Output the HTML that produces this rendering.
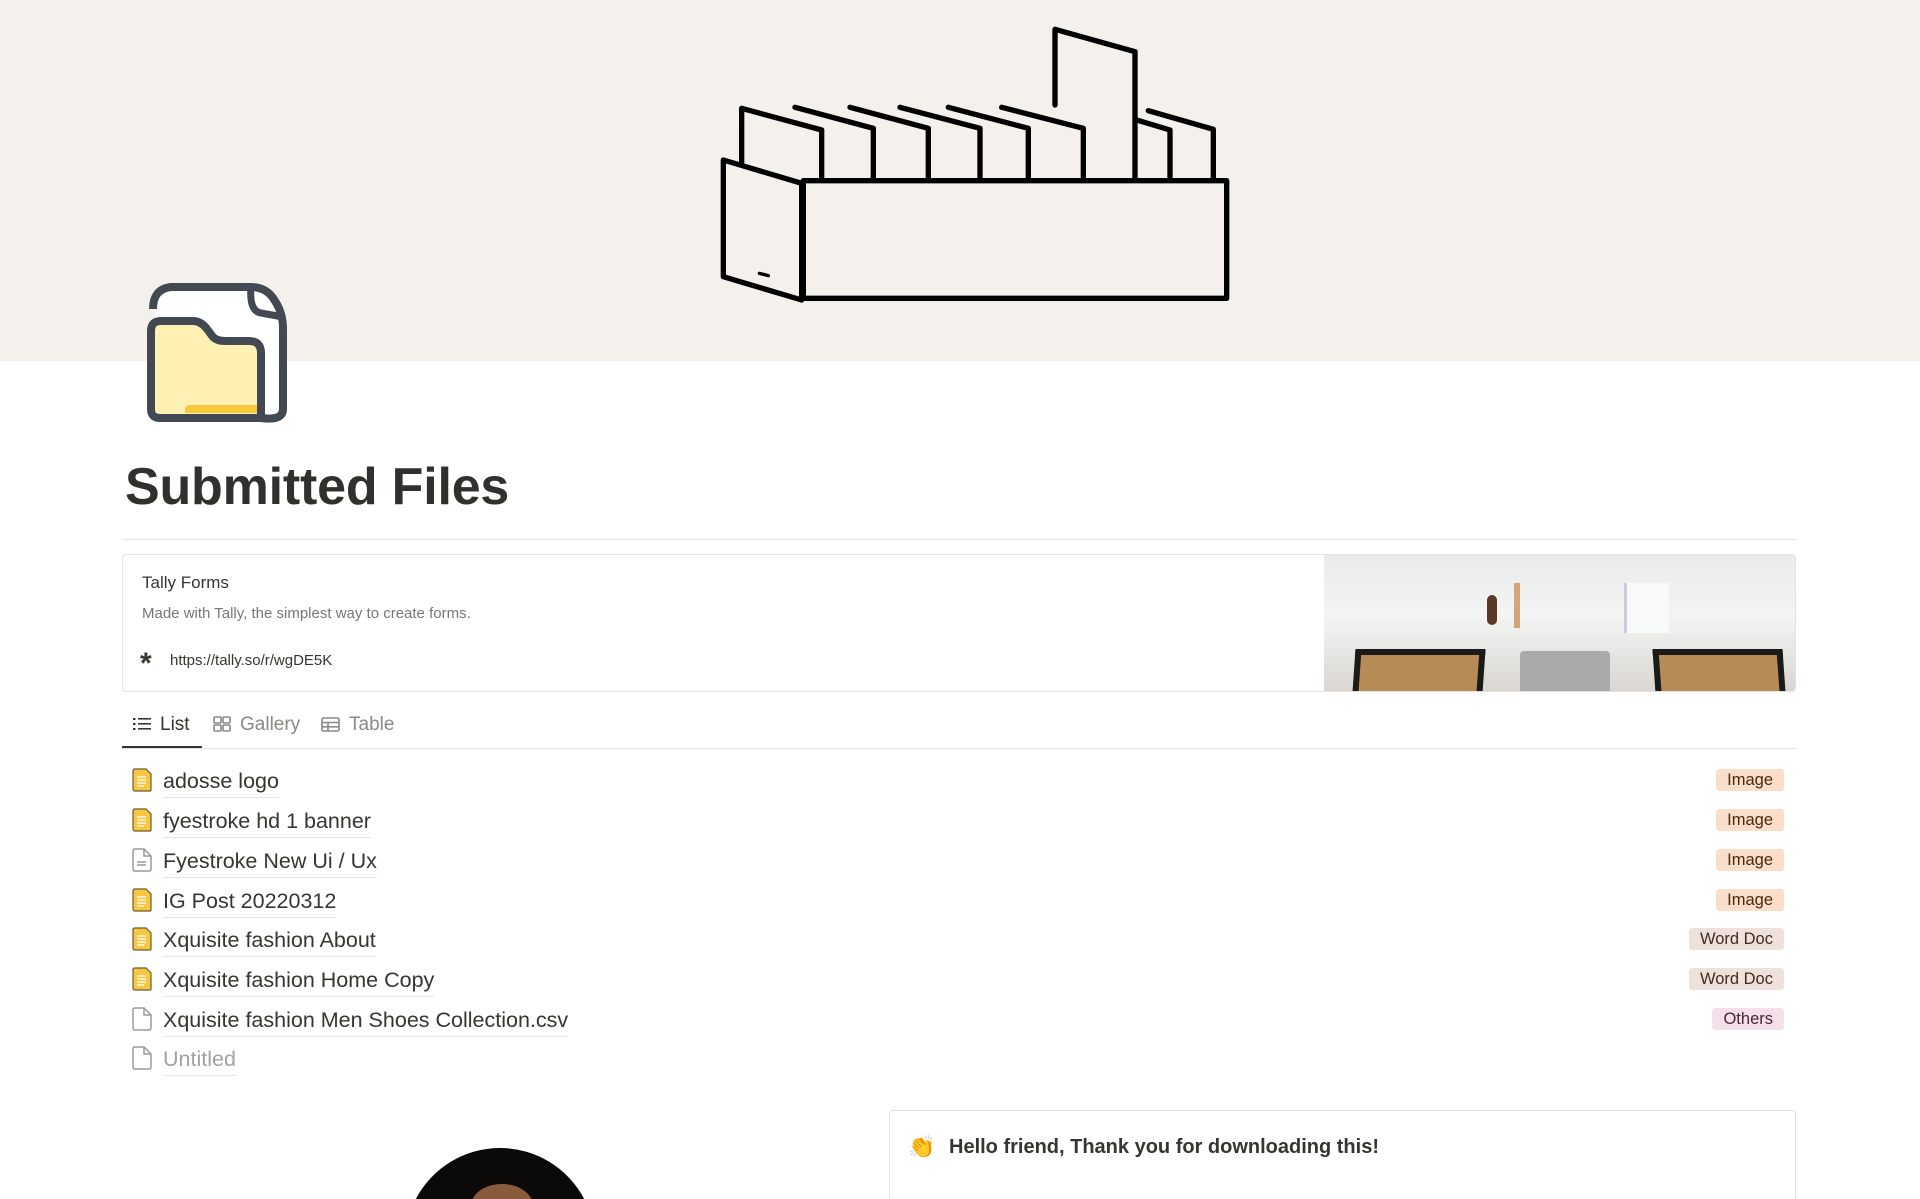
<!DOCTYPE html>
<html><head><meta charset="utf-8"><style>
*{margin:0;padding:0;box-sizing:border-box}
html,body{width:1920px;height:1199px;overflow:hidden}
body{background:#fff;font-family:"Liberation Sans",sans-serif;color:#37352f}
#wrap{position:relative;width:1920px;height:1199px;overflow:hidden}
.banner{position:absolute;left:0;top:0;width:1920px;height:361px;background:#f4f1ec}
.abs{position:absolute}
h1{position:absolute;left:125px;top:457px;font-size:52px;font-weight:bold;color:#32302c;letter-spacing:-0.2px}
.hr{position:absolute;left:122px;width:1674px;height:1px;background:#e3e2e0}
.bm{position:absolute;left:122px;top:554px;width:1674px;height:138px;border:1px solid #e3e2e0;border-radius:4px;overflow:hidden}
.row{position:absolute;left:130px;height:40px;width:1660px}
.row .t{position:absolute;left:33px;top:9px;font-size:21.5px;color:#37352f;border-bottom:1px solid #e6e5e3;padding-bottom:3px;line-height:25px}
.tag{position:absolute;right:6px;top:9px;height:22px;line-height:22px;font-size:16.5px;padding:0 11px;border-radius:3px;color:#49290e;background:#fadec9}
.tag.w{background:#eee0da;color:#442a1e}
.tag.o{background:#f5e0e9;color:#4c2337}
.tab{position:absolute;top:714px;font-size:19px;color:#8a8985}
</style></head><body><div id="wrap">
<div class="banner"></div>
<svg class="abs" style="left:720px;top:20px" width="520" height="290" viewBox="0 0 1560 870" fill="none" stroke="#000" stroke-width="16" stroke-linejoin="round" stroke-linecap="round">
<path d="M10,420 L10,770 L245,840 L245,490 Z"/>
<rect x="250" y="482" width="1270" height="353"/>
<path d="M65,430 L65,265 L305,330 L305,480"/>
<path d="M225,262 L460,325 L460,480 M390,262 L625,325 L625,480 M540,262 L780,325 L780,480 M685,262 L925,325 L925,480 M845,262 L1090,325 L1090,480"/>
<path d="M1005,255 L1005,28 L1245,95 L1245,480"/>
<path d="M1250,300 L1350,330 L1350,480 M1285,272 L1480,328 L1480,480"/>
<path d="M118,760 L145,767" stroke-width="10"/>
</svg>
<svg class="abs" style="left:143px;top:281px" width="148" height="142" viewBox="0 0 148 142" fill="none">
<path d="M12,24 L12,18 Q12,4 26,4 L108,4 Q122,4 128,14 L138,28 Q144,38 144,48 L144,128 Q144,138 136,138 L10,138 Z" fill="#fff"/>
<path d="M10,28 Q10,8 28,6 L108,6 Q124,6 132,20 Q140,32 140,48 L140,128" stroke="#434952" stroke-width="8"/>
<path d="M108,6 Q106,30 118,32 L140,36" stroke="#434952" stroke-width="7"/>
<path d="M8,50 L8,128 Q8,137 17,137 L118,137 L118,72 Q118,60 106,60 L82,60 Q74,60 70,56 L64,48 Q58,40 50,40 L18,40 Q8,40 8,50 Z" fill="#fff0b3" stroke="#434952" stroke-width="8"/>
<path d="M42,132 L42,128 Q42,124 48,124 L114,124 L114,132 Z" fill="#f9c93a"/>
<path d="M118,137 Q140,140 140,128" stroke="#434952" stroke-width="8"/>
</svg>
<h1>Submitted Files</h1>
<div class="hr" style="top:539px"></div>
<div class="bm">
<div class="abs" style="left:19px;top:18px;font-size:17px;color:#37352f">Tally Forms</div>
<div class="abs" style="left:19px;top:50px;font-size:15px;color:#787774">Made with Tally, the simplest way to create forms.</div>
<div class="abs" style="left:17px;top:94px;font-size:30px;font-weight:bold;line-height:30px">*</div>
<div class="abs" style="left:47px;top:97px;font-size:15px;color:#37352f">https://tally.so/r/wgDE5K</div>
<div class="abs" style="left:1201px;top:0;width:473px;height:138px;background:linear-gradient(180deg,#e9eceb 0%,#f3f4f3 45%,#e6e6e4 70%,#d9d5cf 100%)">
<div class="abs" style="left:30px;top:94px;width:130px;height:44px;background:#b78b55;border:6px solid #1a1a1a;border-bottom:0;transform:skewX(-4deg)"></div>
<div class="abs" style="left:330px;top:94px;width:130px;height:44px;background:#b78b55;border:6px solid #1a1a1a;border-bottom:0;transform:skewX(4deg)"></div>
<div class="abs" style="left:196px;top:96px;width:90px;height:42px;background:#a9abab;border-radius:4px 4px 0 0"></div>
<div class="abs" style="left:300px;top:28px;width:45px;height:50px;background:#f8fafa;border-left:3px solid #ccd;"></div>
<div class="abs" style="left:163px;top:40px;width:10px;height:30px;background:#5a3a26;border-radius:5px"></div>
<div class="abs" style="left:190px;top:28px;width:6px;height:45px;background:#d4a676"></div>
</div>
</div>
<div class="tab" style="left:133px;color:#37352f">
<svg width="18" height="14" viewBox="0 0 18 14" style="vertical-align:-1px;margin-right:9px" fill="#37352f"><rect x="0" y="1" width="2.5" height="2"/><rect x="5" y="1" width="13" height="1.6"/><rect x="0" y="6" width="2.5" height="2"/><rect x="5" y="6" width="13" height="1.6"/><rect x="0" y="11" width="2.5" height="2"/><rect x="5" y="11" width="13" height="1.6"/></svg>List</div>
<div class="tab" style="left:213px"><svg width="18" height="16" viewBox="0 0 18 16" style="vertical-align:-2px;margin-right:9px" fill="none" stroke="#8a8985" stroke-width="1.6"><rect x="1" y="1" width="7" height="6" rx="1"/><rect x="10" y="1" width="7" height="6" rx="1"/><rect x="1" y="9" width="7" height="6" rx="1"/><rect x="10" y="9" width="7" height="6" rx="1"/></svg>Gallery</div>
<div class="tab" style="left:321px"><svg width="19" height="15" viewBox="0 0 19 15" style="vertical-align:-2px;margin-right:9px" fill="none" stroke="#8a8985" stroke-width="1.6"><rect x="1" y="1" width="17" height="13" rx="1.5"/><path d="M1 5.5H18M1 9.8H18M7 5.5V14"/></svg>Table</div>
<div class="hr" style="top:748px"></div>
<div class="abs" style="left:122px;top:746px;width:80px;height:2px;background:#37352f"></div>

<div class="row" style="top:760px"><svg class="abs" style="left:2px;top:8px" width="20" height="24" viewBox="0 0 20 24"><path d="M3 1H14L19 6V22Q19 23 18 23H3Q1 23 1 21V3Q1 1 3 1Z" fill="#f7c744" stroke="#6b5a2a" stroke-width="1.2"/><path d="M5 9H14M5 12H14M5 15H14M5 18H12" stroke="#fff" stroke-width="1.2"/></svg><span class="t">adosse logo</span><span class="tag">Image</span></div>
<div class="row" style="top:800px"><svg class="abs" style="left:2px;top:8px" width="20" height="24" viewBox="0 0 20 24"><path d="M3 1H14L19 6V22Q19 23 18 23H3Q1 23 1 21V3Q1 1 3 1Z" fill="#f7c744" stroke="#6b5a2a" stroke-width="1.2"/><path d="M5 9H14M5 12H14M5 15H14M5 18H12" stroke="#fff" stroke-width="1.2"/></svg><span class="t">fyestroke hd 1 banner</span><span class="tag">Image</span></div>
<div class="row" style="top:840px"><svg class="abs" style="left:2px;top:8px" width="20" height="24" viewBox="0 0 20 24" fill="none" stroke="#9b9a97" stroke-width="1.5"><path d="M3 1H12L19 8V21Q19 23 17 23H3Q1 23 1 21V3Q1 1 3 1Z"/><path d="M12 1V8H19M5 14H14M5 17H14"/></svg><span class="t">Fyestroke New Ui / Ux</span><span class="tag">Image</span></div>
<div class="row" style="top:880px"><svg class="abs" style="left:2px;top:8px" width="20" height="24" viewBox="0 0 20 24"><path d="M3 1H14L19 6V22Q19 23 18 23H3Q1 23 1 21V3Q1 1 3 1Z" fill="#f7c744" stroke="#6b5a2a" stroke-width="1.2"/><path d="M5 9H14M5 12H14M5 15H14M5 18H12" stroke="#fff" stroke-width="1.2"/></svg><span class="t">IG Post 20220312</span><span class="tag">Image</span></div>
<div class="row" style="top:919px"><svg class="abs" style="left:2px;top:8px" width="20" height="24" viewBox="0 0 20 24"><path d="M3 1H14L19 6V22Q19 23 18 23H3Q1 23 1 21V3Q1 1 3 1Z" fill="#f7c744" stroke="#6b5a2a" stroke-width="1.2"/><path d="M5 9H14M5 12H14M5 15H14M5 18H12" stroke="#fff" stroke-width="1.2"/></svg><span class="t">Xquisite fashion About</span><span class="tag w">Word Doc</span></div>
<div class="row" style="top:959px"><svg class="abs" style="left:2px;top:8px" width="20" height="24" viewBox="0 0 20 24"><path d="M3 1H14L19 6V22Q19 23 18 23H3Q1 23 1 21V3Q1 1 3 1Z" fill="#f7c744" stroke="#6b5a2a" stroke-width="1.2"/><path d="M5 9H14M5 12H14M5 15H14M5 18H12" stroke="#fff" stroke-width="1.2"/></svg><span class="t">Xquisite fashion Home Copy</span><span class="tag w">Word Doc</span></div>
<div class="row" style="top:999px"><svg class="abs" style="left:2px;top:8px" width="20" height="24" viewBox="0 0 20 24" fill="none" stroke="#9b9a97" stroke-width="1.5"><path d="M3 1H12L19 8V21Q19 23 17 23H3Q1 23 1 21V3Q1 1 3 1Z"/><path d="M12 1V8H19"/></svg><span class="t">Xquisite fashion Men Shoes Collection.csv</span><span class="tag o">Others</span></div>
<div class="row" style="top:1038px"><svg class="abs" style="left:2px;top:8px" width="20" height="24" viewBox="0 0 20 24" fill="none" stroke="#9b9a97" stroke-width="1.5"><path d="M3 1H12L19 8V21Q19 23 17 23H3Q1 23 1 21V3Q1 1 3 1Z"/><path d="M12 1V8H19"/></svg><span class="t" style="color:#a3a29e">Untitled</span></div>

<div class="abs" style="left:889px;top:1110px;width:907px;height:89px;border:1px solid #e3e2e0;border-bottom:0;border-radius:4px 4px 0 0"></div>
<div class="abs" style="left:908px;top:1134px;font-size:22px">👏</div>
<div class="abs" style="left:949px;top:1136px;font-size:20px;font-weight:bold;color:#37352f">Hello friend, Thank you for downloading this!</div>
<svg class="abs" style="left:405px;top:1148px" width="190" height="51" viewBox="0 0 190 51"><path d="M10.8,51 A95,95 0 0 1 179.2,51 Z" fill="#0c0a09"/><path d="M67.6,51 A31,22 0 0 1 126.4,51 Z" fill="#8a5a3c"/></svg>
</div></body></html>
